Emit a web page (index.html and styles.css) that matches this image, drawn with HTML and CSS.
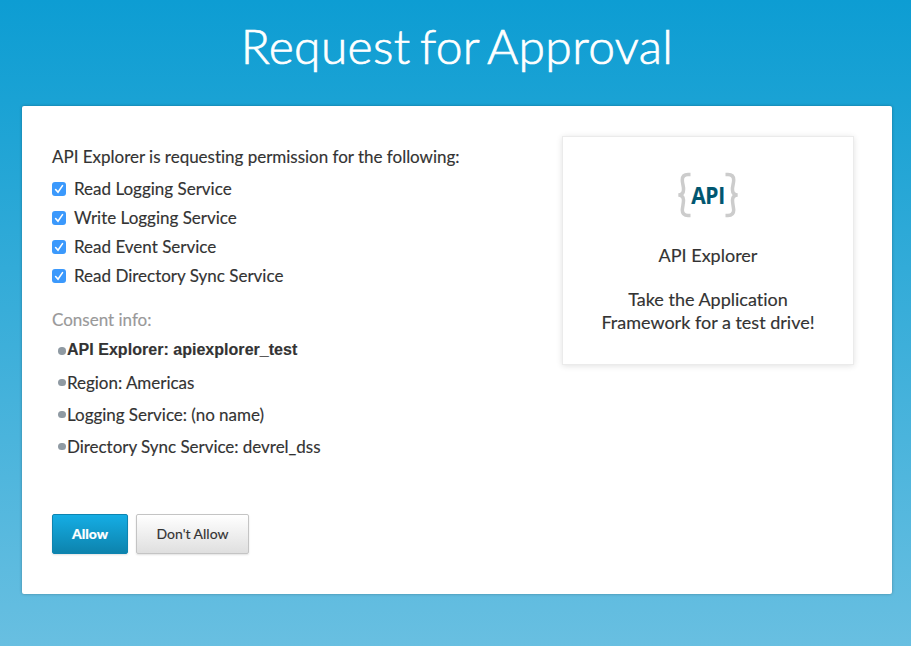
FILE: index.html
```html
<!DOCTYPE html>
<html lang="en">
<head>
<meta charset="utf-8">
<title>Request for Approval</title>
<link rel="stylesheet" href="styles.css">
</head>
<body>
<h1 class="title">Request for Approval</h1>
<main class="panel">
  <section class="request">
    <p class="intro">API Explorer is requesting permission for the following:</p>
    <ul class="scopes">
      <li><span class="check"><svg viewBox="0 0 14 14"><path d="M3.6 7.5 6 10.1 10.5 3.6"/></svg></span><span>Read Logging Service</span></li>
      <li><span class="check"><svg viewBox="0 0 14 14"><path d="M3.6 7.5 6 10.1 10.5 3.6"/></svg></span><span>Write Logging Service</span></li>
      <li><span class="check"><svg viewBox="0 0 14 14"><path d="M3.6 7.5 6 10.1 10.5 3.6"/></svg></span><span>Read Event Service</span></li>
      <li><span class="check"><svg viewBox="0 0 14 14"><path d="M3.6 7.5 6 10.1 10.5 3.6"/></svg></span><span>Read Directory Sync Service</span></li>
    </ul>
    <p class="consent-label">Consent info:</p>
    <ul class="consent">
      <li class="app">API Explorer: apiexplorer_test</li>
      <li>Region: Americas</li>
      <li>Logging Service: (no name)</li>
      <li>Directory Sync Service: devrel_dss</li>
    </ul>
    <div class="actions">
      <button class="btn primary">Allow</button>
      <button class="btn">Don't Allow</button>
    </div>
  </section>
  <aside class="card">
    <div class="logo">
      <svg class="brace" viewBox="0 0 13 44"><path d="M12.5 1.600H10Q4.300 1.600 4.300 7Q4.300 9 5 12T5.500 17Q5.500 21.500 0.500 22Q5.500 22.500 5.500 27Q5.500 29 5 32T4.300 37Q4.300 42.400 10 42.400H12.500"/></svg>
      <span class="logo-text">API</span>
      <svg class="brace right" viewBox="0 0 13 44"><path d="M12.5 1.600H10Q4.300 1.600 4.300 7Q4.300 9 5 12T5.500 17Q5.500 21.500 0.500 22Q5.500 22.500 5.500 27Q5.500 29 5 32T4.300 37Q4.300 42.400 10 42.400H12.500"/></svg>
    </div>
    <p class="name">API Explorer</p>
    <p class="desc">Take the Application<br>Framework for a test drive!</p>
  </aside>
</main>
</body>
</html>
```

FILE: styles.css
```css
* { box-sizing: border-box; margin: 0; padding: 0; }
html { height: 100%; }
body {
  height: 646px;
  padding: 0 19px 0 22px;
  overflow: hidden;
  background: linear-gradient(#0d9dd3 0, #1aa2d4 100px, #68bfe1 646px);
  font-family: Lato, "Liberation Sans", sans-serif;
  font-size: 17px;
  line-height: 23px;
  font-variant-ligatures: none;
  color: #333;
  -webkit-text-stroke: .15px currentColor;
}
.title {
  height: 106px;
  padding-top: 16px;
  font-size: 48px;
  line-height: 60px;
  font-weight: 300;
  letter-spacing: .35px;
  word-spacing: -4px;
  text-align: center;
  color: #fff;
  -webkit-text-stroke: .7px #fff;
}
.panel {
  display: flex;
  justify-content: space-between;
  align-items: flex-start;
  height: 488px;
  padding: 30px 38px 0 30px;
  background: #fff;
  border-radius: 2px;
  box-shadow: 0 0 3px rgba(0, 0, 0, .3);
}
ul { list-style: none; }
p, li { white-space: nowrap; }
.request { padding-top: 9px; }
.intro { letter-spacing: -.015px; }
.scopes { margin-top: 6px; }
.scopes li { display: flex; align-items: center; height: 29px; }
.check {
  width: 14px;
  height: 14px;
  margin-right: 8px;
  background: #3b99fc;
  border-radius: 3px;
}
.check svg { display: block; width: 14px; height: 14px; fill: none; stroke: #fff; stroke-width: 1.6; stroke-linecap: round; }
.consent-label { margin-top: 18px; color: #999; }
.consent { padding: 2px 0 0 6px; letter-spacing: -.03px; }
.consent li { display: flex; align-items: center; height: 32px; }
.consent li::before {
  content: "";
  width: 7.5px;
  height: 7.5px;
  margin: 1px 1.5px 0 0;
  border-radius: 50%;
  background: #8f9aa3;
}
.consent .app {
  margin-bottom: 1px;
  font-family: "Liberation Sans", sans-serif;
  font-weight: 700;
  font-size: 16px;
  letter-spacing: .03px;
}
.consent .app::before { margin-top: 4px; }
.actions { display: flex; gap: 8px; margin-top: 52px; }
.btn {
  height: 40px;
  width: 113px;
  border: 1px solid #c4c4c4;
  border-radius: 2px;
  background: linear-gradient(#fff, #dfdfdf);
  box-shadow: 0 1px 2px rgba(0, 0, 0, .12);
  font: 400 14px/20px Lato, sans-serif;
  color: #333;
}
.btn.primary {
  width: 76px;
  border-color: #0d84b0;
  background: linear-gradient(#15ade4, #0d83ad);
  font-weight: 900;
  color: #fff;
}
.card {
  width: 292px;
  height: 229px;
  padding-top: 35px;
  border: 1px solid #ebebeb;
  box-shadow: 0 1px 6px rgba(0, 0, 0, .12);
  font-size: 18px;
  text-align: center;
}
.logo { display: flex; justify-content: center; align-items: center; height: 46px; }
.brace { width: 13px; height: 44px; fill: none; stroke: #ccc; stroke-width: 3.5; overflow: visible; }
.right { transform: scaleX(-1); }
.logo-text {
  display: flex;
  justify-content: center;
  width: 34px;
  padding-bottom: 1px;
  font: 700 23px/24px "Open Sans", sans-serif;
  letter-spacing: -.3px;
  color: #005670;
  transform: scaleX(.91);
}
.name { margin-top: 26px; }
.desc { margin-top: 21px; }
```
